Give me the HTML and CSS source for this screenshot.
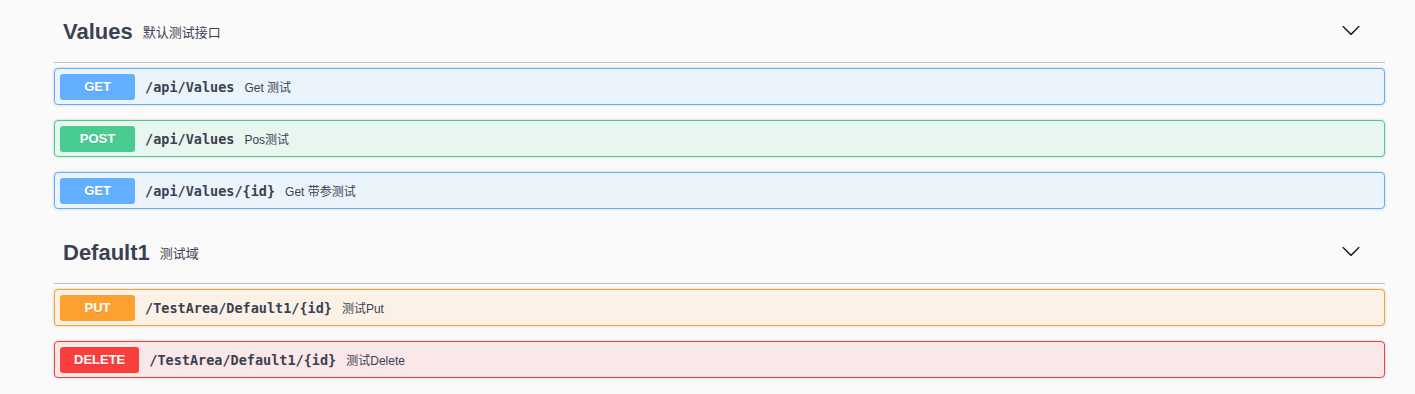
FILE: index.html
```html
<!DOCTYPE html>
<html lang="zh-CN">

<head>
    <meta charset="UTF-8" />
    <meta name="viewport" content="width=device-width, initial-scale=1.0" />
    <title>API 文档</title>

    <!-- 样式表 -->
    <link rel="stylesheet" href="styles.css">
</head>

<body>

    <div class="wrapper">

        <!-- 分组：Values -->
        <div class="tag-section">
            <div class="tag-header">
                <span class="tag-name">Values</span>
                <span class="tag-desc">默认测试接口</span>
                <svg class="tag-arrow" width="20" height="20" viewBox="0 0 20 20">
                    <path d="M17.418 6.109c.272-.268.709-.268.979 0s.271.701 0 .969l-7.908 7.83c-.27.268-.707.268-.979 0l-7.908-7.83c-.27-.268-.27-.701 0-.969.271-.268.709-.268.979 0L10 13.25l7.418-7.141z"/>
                </svg>
            </div>

            <div class="opblock opblock-get">
                <span class="method">GET</span>
                <span class="path">/api/Values</span>
                <span class="summary">Get 测试</span>
            </div>

            <div class="opblock opblock-post">
                <span class="method">POST</span>
                <span class="path">/api/Values</span>
                <span class="summary">Pos测试</span>
            </div>

            <div class="opblock opblock-get">
                <span class="method">GET</span>
                <span class="path">/api/Values/{id}</span>
                <span class="summary">Get 带参测试</span>
            </div>
        </div>

        <!-- 分组：Default1 -->
        <div class="tag-section">
            <div class="tag-header">
                <span class="tag-name">Default1</span>
                <span class="tag-desc">测试域</span>
                <svg class="tag-arrow" width="20" height="20" viewBox="0 0 20 20">
                    <path d="M17.418 6.109c.272-.268.709-.268.979 0s.271.701 0 .969l-7.908 7.83c-.27.268-.707.268-.979 0l-7.908-7.83c-.27-.268-.27-.701 0-.969.271-.268.709-.268.979 0L10 13.25l7.418-7.141z"/>
                </svg>
            </div>

            <div class="opblock opblock-put">
                <span class="method">PUT</span>
                <span class="path">/TestArea/Default1/{id}</span>
                <span class="summary">测试Put</span>
            </div>

            <div class="opblock opblock-delete">
                <span class="method">DELETE</span>
                <span class="path">/TestArea/Default1/{id}</span>
                <span class="summary">测试Delete</span>
            </div>
        </div>

    </div>

</body>

</html>
```

FILE: styles.css
```css
/* 页面整体 */
body {
    margin: 0;
    background-color: #fafafa;
    font-family: "Liberation Sans", Arial, "Noto Sans CJK SC", sans-serif;
    color: #3b4151;
}

/* 内容容器 */
.wrapper {
    padding: 3px 30px 0 54px;
}

/* 分组标题栏 */
.tag-header {
    display: flex;
    align-items: center;
    height: 60px;
    box-sizing: border-box;
    padding: 0 24px 2px 9px;
    margin-bottom: 5px;
    border-bottom: 1px solid rgba(59, 65, 81, 0.3);
}

.tag-name {
    font-size: 22px;
    font-weight: bold;
}

.tag-desc {
    font-size: 13px;
    margin-left: 10px;
    flex: 1;
}

/* 展开箭头 */
.tag-arrow {
    fill: #1f1f1f;
    margin-bottom: 3px;
}

/* 接口行 */
.opblock {
    display: flex;
    align-items: center;
    height: 37px;
    box-sizing: border-box;
    padding: 0 5px;
    margin-bottom: 15px;
    border: 1px solid #000;
    border-radius: 4px;
    box-shadow: 0 0 3px rgba(0, 0, 0, 0.19);
}

/* 请求方法标签 */
.method {
    min-width: 75px;
    height: 26px;
    line-height: 26px;
    box-sizing: border-box;
    padding: 0 14px;
    border-radius: 3px;
    text-align: center;
    font-size: 13px;
    font-weight: bold;
    color: #fff;
    text-shadow: 0 1px 0 rgba(0, 0, 0, 0.1);
}

.path {
    padding: 0 10px;
    font-family: "DejaVu Sans Mono", "Liberation Mono", monospace;
    font-size: 13.5px;
    font-weight: bold;
}

.summary {
    font-size: 12px;
}

/* 各方法的颜色 */
.opblock-get {
    background: #ebf3fb;
    border-color: #61affe;
}

.opblock-get .method {
    background: #61affe;
}

.opblock-post {
    background: #e8f6f0;
    border-color: #49cc90;
}

.opblock-post .method {
    background: #49cc90;
}

.opblock-put {
    background: #fbf1e6;
    border-color: #fca130;
}

.opblock-put .method {
    background: #fca130;
}

.opblock-delete {
    background: #fae7e7;
    border-color: #f93e3e;
}

.opblock-delete .method {
    background: #f93e3e;
}
```
